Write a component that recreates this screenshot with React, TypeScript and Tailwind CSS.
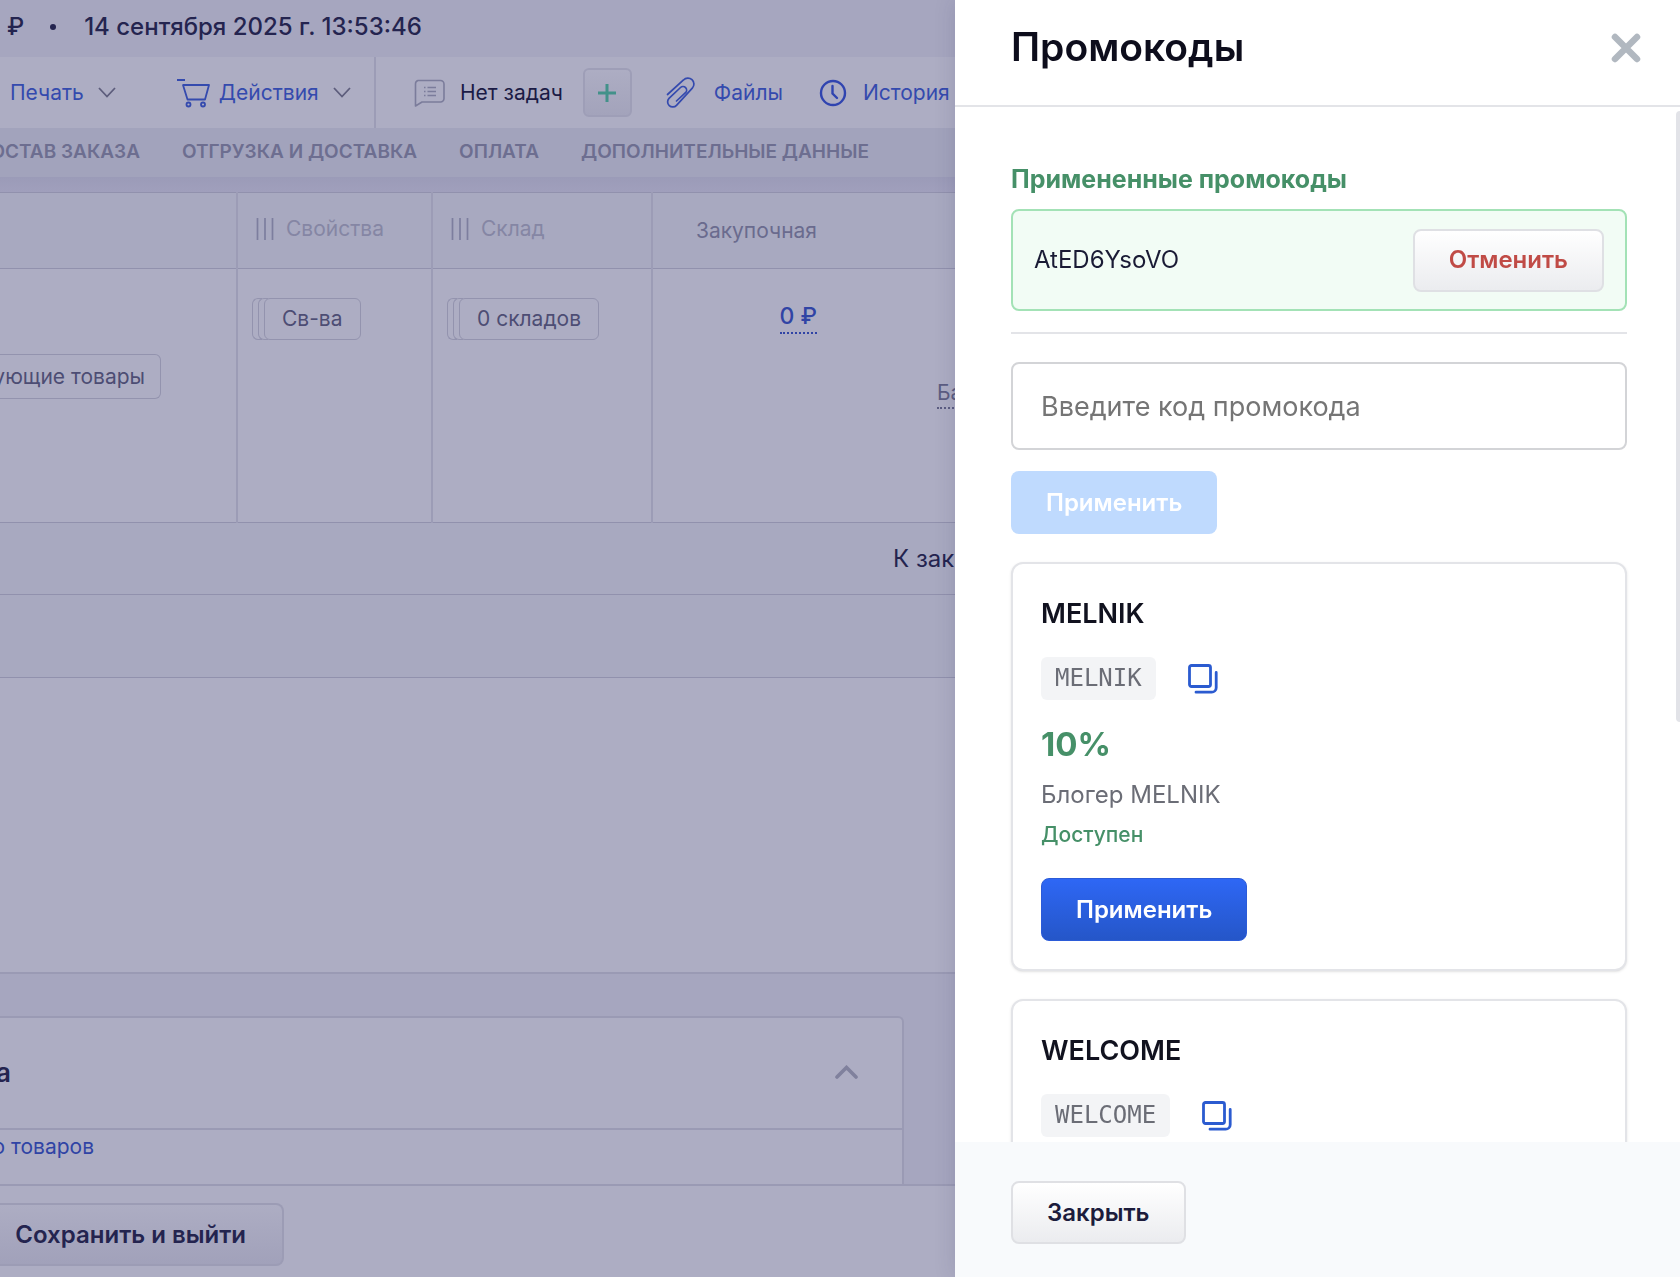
import type { ReactNode } from "react";

type Promo = {
  title: string;
  code: string;
  discount?: string;
  description?: string;
};

const promos: Promo[] = [
  { title: "MELNIK", code: "MELNIK", discount: "10%", description: "Блогер MELNIK" },
  { title: "WELCOME", code: "WELCOME" },
];

const tabs = ["ОТГРУЗКА И ДОСТАВКА", "ОПЛАТА", "ДОПОЛНИТЕЛЬНЫЕ ДАННЫЕ"];

function ChevronDown() {
  return (
    <svg width="18" height="11" viewBox="0 0 18 11" fill="none" stroke="#5d5d7c" strokeWidth="1.8">
      <path d="M1 1l8 8.5L17 1" />
    </svg>
  );
}

function CartIcon() {
  return (
    <svg width="34" height="30" viewBox="0 0 34 30" fill="none" stroke="#344aae" strokeWidth="1.8" strokeLinejoin="round">
      <path d="M0 2h8M6 7h26l-4 14.500H10.500z" />
      <circle cx="11.500" cy="26.500" r="2" />
      <circle cx="26" cy="26.500" r="2" />
    </svg>
  );
}

function CommentIcon() {
  return (
    <svg width="32" height="28" viewBox="0 0 32 28" fill="none" stroke="#7b7c9b" strokeWidth="1.6" strokeLinejoin="round">
      <path d="M4 1.500h22.500a3.500 3.500 0 0 1 3.500 3.500v14.500a3.500 3.500 0 0 1-3.500 3.500H8l-6.500 4V5A3.500 3.500 0 0 1 4 1.500z" />
      <path d="M10 8.500h1.500M13.500 8.500h8.500M10 12.500h1.500M13.500 12.500h8.500M10 16.500h1.500M13.500 16.500h8.500" />
    </svg>
  );
}

function ClipIcon() {
  return (
    <svg width="30" height="32" viewBox="0 0 30 32" fill="none" stroke="#344aae" strokeWidth="1.7" strokeLinecap="round">
      <path d="M1.500 17.500L17.500 3a6 6 0 0 1 8.800 8.200L10.500 28.300a5 5 0 0 1-7.500-7L14.500 10.500a3.600 3.600 0 0 1 5 5.200L10.500 24" />
    </svg>
  );
}

function ClockIcon() {
  return (
    <svg width="28" height="28" viewBox="0 0 28 28" fill="none" stroke="#3044b0" strokeWidth="2.400" strokeLinecap="round">
      <circle cx="14" cy="14" r="12" />
      <path d="M13.500 7v7.500l4.500 4.500" />
    </svg>
  );
}

function CopyIcon() {
  return (
    <svg width="30" height="30" viewBox="0 0 30 30" fill="none" stroke="#2b5bd0" strokeWidth="2.800" strokeLinecap="round">
      <rect x="1.500" y="1.500" width="21" height="21" rx="2" />
      <path d="M28.200 8.500v15.200a4.500 4.500 0 0 1-4.500 4.500H8" />
    </svg>
  );
}

function ColumnIcon() {
  return (
    <svg width="18" height="22" viewBox="0 0 18 22" stroke="#7d7e9e" strokeWidth="1.700">
      <path d="M1.500 0v22M9 0v22M16.500 0v22" />
    </svg>
  );
}

// A tag with two more edges peeking out on its left
function StackedTag({ children }: { children: ReactNode }) {
  return (
    <button type="button" className="flex h-[42px] text-[21px] whitespace-nowrap text-[#4d4d74]">
      <span className="-mr-1 h-full w-[10px] rounded-l-md border border-r-0 border-[#9393ae]" />
      <span className="-mr-1 h-full w-[10px] rounded-l-md border border-r-0 border-[#9393ae]" />
      <span className="flex h-full items-center rounded-md border border-[#9393ae] px-[17px]">{children}</span>
    </button>
  );
}

function OrderTable() {
  return (
    <table className="w-full table-fixed border-collapse text-[21px]">
      <colgroup>
        <col className="w-[237px]" />
        <col className="w-[195px]" />
        <col className="w-[220px]" />
        <col className="w-[181px]" />
        <col />
      </colgroup>
      <thead>
        <tr className="h-[76px] border-y border-[#9191ad] bg-[#a8a9c0] text-left text-[#8586a4]">
          <th className="border-r-2 border-r-[#9c9cb6]" />
          <th className="border-r-2 border-r-[#9c9cb6] px-[18px] pb-1 font-normal">
            <span className="flex items-center gap-3">
              <ColumnIcon />
              Свойства
            </span>
          </th>
          <th className="border-r-2 border-r-[#9c9cb6] px-[18px] pb-1 font-normal">
            <span className="flex items-center gap-3">
              <ColumnIcon />
              Склад
            </span>
          </th>
          <th className="pr-4 text-right font-normal text-[#6a6b8e]">Закупочная</th>
          <th />
        </tr>
      </thead>
      <tbody>
        <tr className="h-[254px] border-b border-[#9191ad] align-top">
          <td className="border-r-2 border-r-[#9c9cb6] pt-[85px]">
            <button
              type="button"
              className="flex h-[45px] w-[161px] items-center justify-end rounded-r-md border border-l-0 border-[#9393ae] pr-[15px] whitespace-nowrap text-[#4d4d74]"
            >
              ующие товары
            </button>
          </td>
          <td className="border-r-2 border-r-[#9c9cb6] px-[14px] pt-[29px]">
            <StackedTag>Св-ва</StackedTag>
          </td>
          <td className="border-r-2 border-r-[#9c9cb6] px-[14px] pt-[29px]">
            <StackedTag>0 складов</StackedTag>
          </td>
          <td className="pt-[31px] pr-4 text-right">
            <a href="#price" className="inline-block border-b-2 border-dotted border-[#3044a5] text-[23px] leading-8 font-medium text-[#3044a5]">
              0 ₽
            </a>
          </td>
          <td className="pt-[108px] pl-[104px]">
            <a href="#base" className="inline-block border-b-2 border-dotted border-[#5c5d82] leading-7 text-[#5c5d82]">
              Ба
            </a>
          </td>
        </tr>
      </tbody>
    </table>
  );
}

function OrderPage() {
  return (
    <main className="flex h-screen flex-col overflow-hidden bg-[#a6a6bf] text-[#24244f]">
      <header className="flex h-[57px] shrink-0 items-center pb-1 pl-[7px] text-[24px] font-medium">
        <span>₽</span>
        <span className="ml-[26px] h-[6px] w-[6px] rounded-full bg-[#24244f]" />
        <span className="ml-7">14 сентября 2025 г. 13:53:46</span>
      </header>

      <div className="flex h-[71px] shrink-0 bg-[#adadc3] text-[21px] whitespace-nowrap text-[#344aae]">
        <div className="flex w-[376px] items-center border-r-2 border-[#9c9cb6] pl-[10px]">
          <button type="button" className="flex items-center gap-[14px]">
            Печать
            <ChevronDown />
          </button>
          <button type="button" className="ml-[61px] flex items-center gap-[14px]">
            <span className="flex items-center gap-2">
              <CartIcon />
              Действия
            </span>
            <ChevronDown />
          </button>
        </div>
        <div className="flex items-center pl-[38px]">
          <CommentIcon />
          <span className="ml-[14px] text-[#1b1b45]">Нет задач</span>
          <button
            type="button"
            aria-label="Добавить задачу"
            className="ml-5 flex h-[49px] w-[49px] items-center justify-center rounded-md border-2 border-[#9e9eb7] bg-gradient-to-b from-[#adadc3] to-[#a3a3bb]"
          >
            <svg width="18" height="18" viewBox="0 0 18 18" stroke="#43918a" strokeWidth="3">
              <path d="M9 0v18M0 9h18" />
            </svg>
          </button>
          <a href="#files" className="ml-[34px] flex items-center gap-[18px]">
            <ClipIcon />
            Файлы
          </a>
          <a href="#history" className="ml-9 flex items-center gap-4">
            <ClockIcon />
            История
          </a>
        </div>
      </div>

      <nav className="flex h-[49px] shrink-0 items-center gap-[42px] bg-[#a2a3bc] text-[19px] font-semibold whitespace-nowrap text-[#6d6e90]">
        <a href="#items" className="flex w-[140px] justify-end">
          ОСТАВ ЗАКАЗА
        </a>
        {tabs.map((tab) => (
          <a key={tab} href="#tab">
            {tab}
          </a>
        ))}
      </nav>

      <div className="min-h-0 flex-1 overflow-hidden">
        <div className="h-[15px] bg-gradient-to-b from-[#9b9bb8] to-[#a09fbc]" />
        <section className="border-b-2 border-[#9a9ab4] bg-[#adadc3]">
          <OrderTable />
          <div className="flex h-[72px] items-center border-b border-[#9191ad] bg-[#a8a9c0] pl-[893px] text-[24px]">К зак</div>
          <div className="h-[83px] border-b border-[#9191ad] bg-[#a8a9c0]" />
          <div className="h-[294px]" />
        </section>
        <section className="mt-[42px] h-60 w-[904px] rounded-tr-md border-t-2 border-r-2 border-[#9a9ab4] bg-[#adadc3]">
          <div className="flex h-[112px] items-center justify-between border-b-2 border-[#9a9ab4] pr-[44px] pb-[2px]">
            <h2 className="flex w-[11px] justify-end text-[26px] font-semibold">а</h2>
            <button type="button" aria-label="Свернуть">
              <svg width="23" height="14" viewBox="0 0 23 14" fill="none" stroke="#80819d" strokeWidth="3.600" strokeLinecap="round">
                <path d="M2 12l9.500-9.500L21 12" />
              </svg>
            </button>
          </div>
          <a href="#goods" className="flex w-[94px] justify-end pt-[3px] text-[21px] leading-7 whitespace-nowrap text-[#3044a5]">
            о товаров
          </a>
        </section>
      </div>

      <footer className="h-[93px] shrink-0 border-t-2 border-[#9a9ab4] bg-[#adadc3] pt-[17px]">
        <button
          type="button"
          className="flex h-[63px] w-[284px] items-center justify-end rounded-r-lg border-y-2 border-r-2 border-[#9c9cb5] bg-gradient-to-b from-[#adadc3] to-[#a1a1ba] pr-9 text-[24px] font-semibold whitespace-nowrap"
        >
          Сохранить и выйти
        </button>
      </footer>
    </main>
  );
}

function PromoCard({ promo }: { promo: Promo }) {
  return (
    <article className="rounded-xl border-2 border-[#e3e4e8] bg-white px-7 pt-8 pb-7 shadow-sm">
      <h3 className="text-[27px] leading-9 font-semibold text-[#11121f]">{promo.title}</h3>
      <div className="mt-[25px] flex items-center gap-8">
        <code className="rounded-md bg-[#f3f4f6] px-[14px] font-['DejaVu_Sans_Mono',monospace] text-[24px] leading-[43px] text-[#6b6d76]">
          {promo.code}
        </code>
        <button type="button" aria-label="Скопировать">
          <CopyIcon />
        </button>
      </div>
      {promo.discount ? (
        <>
          <p className="mt-6 text-[33px] leading-10 font-bold text-[#469068]">{promo.discount}</p>
          <p className="mt-[15px] text-[24px] leading-8 text-[#6b6d76]">{promo.description}</p>
          <p className="mt-2 text-[21px] leading-8 font-medium text-[#469068]">Доступен</p>
          <button
            type="button"
            className="mt-[27px] h-[63px] rounded-lg border border-[#2b5bd8] bg-gradient-to-b from-[#2e67f5] to-[#2556c8] px-[34px] text-[24px] font-semibold text-white"
          >
            Применить
          </button>
        </>
      ) : null}
    </article>
  );
}

function PromoDrawer() {
  return (
    <aside className="fixed inset-y-0 right-0 flex w-[725px] flex-col bg-white shadow-[0_0_20px_rgba(40,40,90,0.150)]">
      <header className="flex h-[107px] shrink-0 items-center justify-between border-b-2 border-[#e3e4e8] pr-[38px] pb-[10px] pl-14">
        <h1 className="text-[39px] font-semibold text-[#0d0d1c]">Промокоды</h1>
        <button type="button" aria-label="Закрыть панель">
          <svg width="32" height="32" viewBox="0 0 32 32" stroke="#b1b8c0" strokeWidth="6.500" strokeLinecap="round">
            <path d="M5 5l22 22M27 5l-22 22" />
          </svg>
        </button>
      </header>

      <div className="relative min-h-0 flex-1 overflow-hidden pt-14 pr-[53px] pl-14">
        <span className="absolute top-1 right-0 h-[611px] w-1 rounded-l-full bg-[#e2e3e8]" />

        <h2 className="text-[25px] leading-8 font-bold text-[#469068]">Примененные промокоды</h2>
        <div className="mt-[14px] flex h-[102px] items-center justify-between rounded-lg border-2 border-[#a3e2b6] bg-[#f2fcf5] px-[21px]">
          <span className="text-[24px] text-[#1a1b35]">AtED6YsoVO</span>
          <button
            type="button"
            className="h-[63px] rounded-lg border-2 border-[#dfe0e4] bg-gradient-to-b from-white to-[#ebecef] px-[34px] text-[24px] font-semibold text-[#c04b46]"
          >
            Отменить
          </button>
        </div>

        <div className="mt-[21px] border-t-2 border-[#e3e4e8] pt-7">
          <label htmlFor="promo-code" className="sr-only">
            Введите код промокода
          </label>
          <input
            id="promo-code"
            type="text"
            placeholder="Введите код промокода"
            className="h-[88px] w-full rounded-lg border-2 border-[#d3d4d7] px-7 text-[27px] placeholder:text-[#757575]"
          />
          <button type="button" disabled className="mt-[21px] h-[63px] rounded-lg bg-[#bfdafe] px-[35px] text-[24px] font-semibold text-white">
            Применить
          </button>
        </div>

        <div className="mt-7 flex flex-col gap-7">
          {promos.map((promo) => (
            <PromoCard key={promo.code} promo={promo} />
          ))}
        </div>
      </div>

      <footer className="h-[135px] shrink-0 bg-[#f8fafc] px-14 pt-[39px]">
        <button
          type="button"
          className="h-[63px] rounded-lg border-2 border-[#dfe0e4] bg-gradient-to-b from-white to-[#ebecef] px-[34px] text-[24px] font-semibold text-[#1c1c3c]"
        >
          Закрыть
        </button>
      </footer>
    </aside>
  );
}

export default function App() {
  return (
    <div className="font-['Inter','Noto_Sans',sans-serif]">
      <OrderPage />
      <PromoDrawer />
    </div>
  );
}
